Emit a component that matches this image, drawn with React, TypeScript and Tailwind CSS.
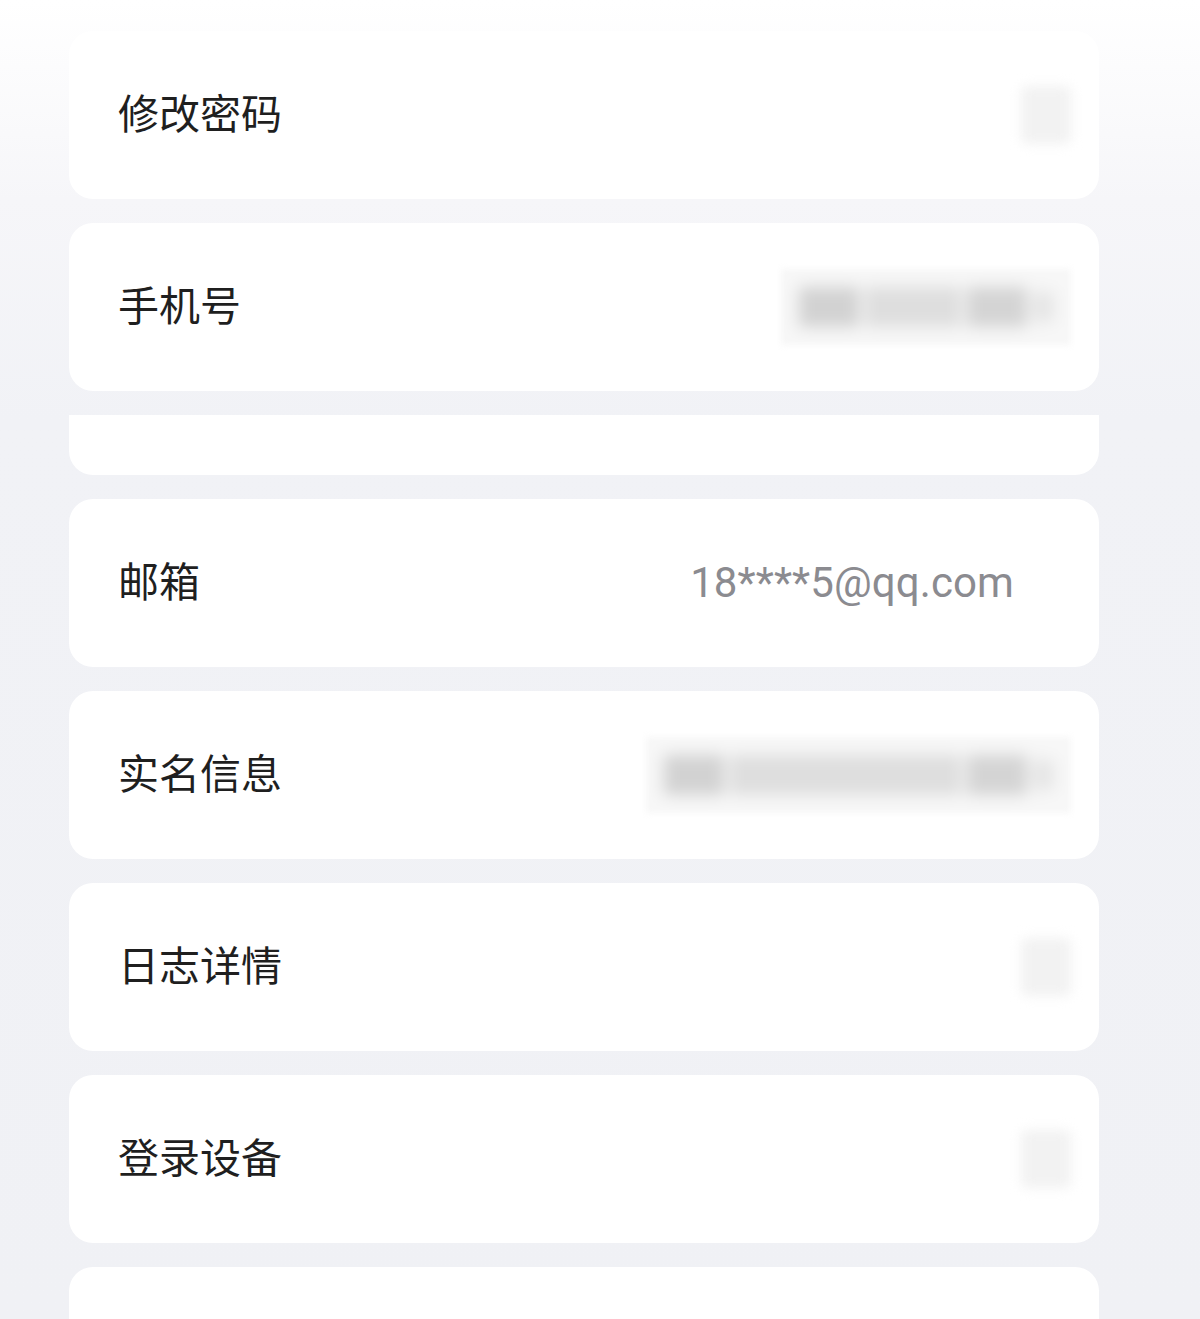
import React from "react";

const label = "mb-[8px] text-[41px] leading-none text-[#1f1f1f] [font-family:'Noto_Sans_CJK_SC','Noto_Sans',sans-serif]";

const ChevronBlur = () => (
  <div className="w-[50px] h-[58px] rounded-md bg-[#f2f2f2] blur-[6px]" />
);

const ValueBlur = ({ width }: { width: string }) => (
  <div className={`${width} h-[76px] flex items-center px-[18px] bg-[#f7f7f7] blur-[3px]`}>
    <div className="flex-1 h-[44px] flex items-center gap-[6px] blur-[7px]">
      <div className="w-[60px] h-[40px] bg-[#d2d2d2]" />
      <div className="flex-1 h-[40px] bg-[#dedede]" />
      <div className="w-[60px] h-[40px] bg-[#d4d4d4]" />
      <div className="w-[20px] h-[30px] bg-[#e4e4e4]" />
    </div>
  </div>
);

const Row = ({ title, right }: { title: string; right?: React.ReactNode }) => (
  <div className="h-[168px] shrink-0 rounded-[24px] bg-white flex items-center justify-between pl-[49px] pr-[28px]">
    <span className={label}>{title}</span>
    {right}
  </div>
);

export default function App() {
  return (
    <div className="h-[1319px] overflow-hidden bg-[linear-gradient(to_bottom,#ffffff_0px,#f6f6f9_200px,#f1f2f6_420px,#f0f1f5_100%)]">
      <div className="ml-[69px] w-[1030px] flex flex-col gap-[24px] pt-[31px]">
        <Row title="修改密码" right={<ChevronBlur />} />
        <Row title="手机号" right={<ValueBlur width="w-[290px]" />} />
        <div className="h-[60px] shrink-0 rounded-b-[24px] bg-white" />
        <Row
          title="邮箱"
          right={
            <span className="mr-[57px] text-[42px] leading-none tracking-[0.1px] text-[#8b8b90] [font-family:Roboto,'Liberation_Sans',sans-serif]">
              18****5@qq.com
            </span>
          }
        />
        <Row title="实名信息" right={<ValueBlur width="w-[425px]" />} />
        <Row title="日志详情" right={<ChevronBlur />} />
        <Row title="登录设备" right={<ChevronBlur />} />
        <Row title="" />
      </div>
    </div>
  );
}
